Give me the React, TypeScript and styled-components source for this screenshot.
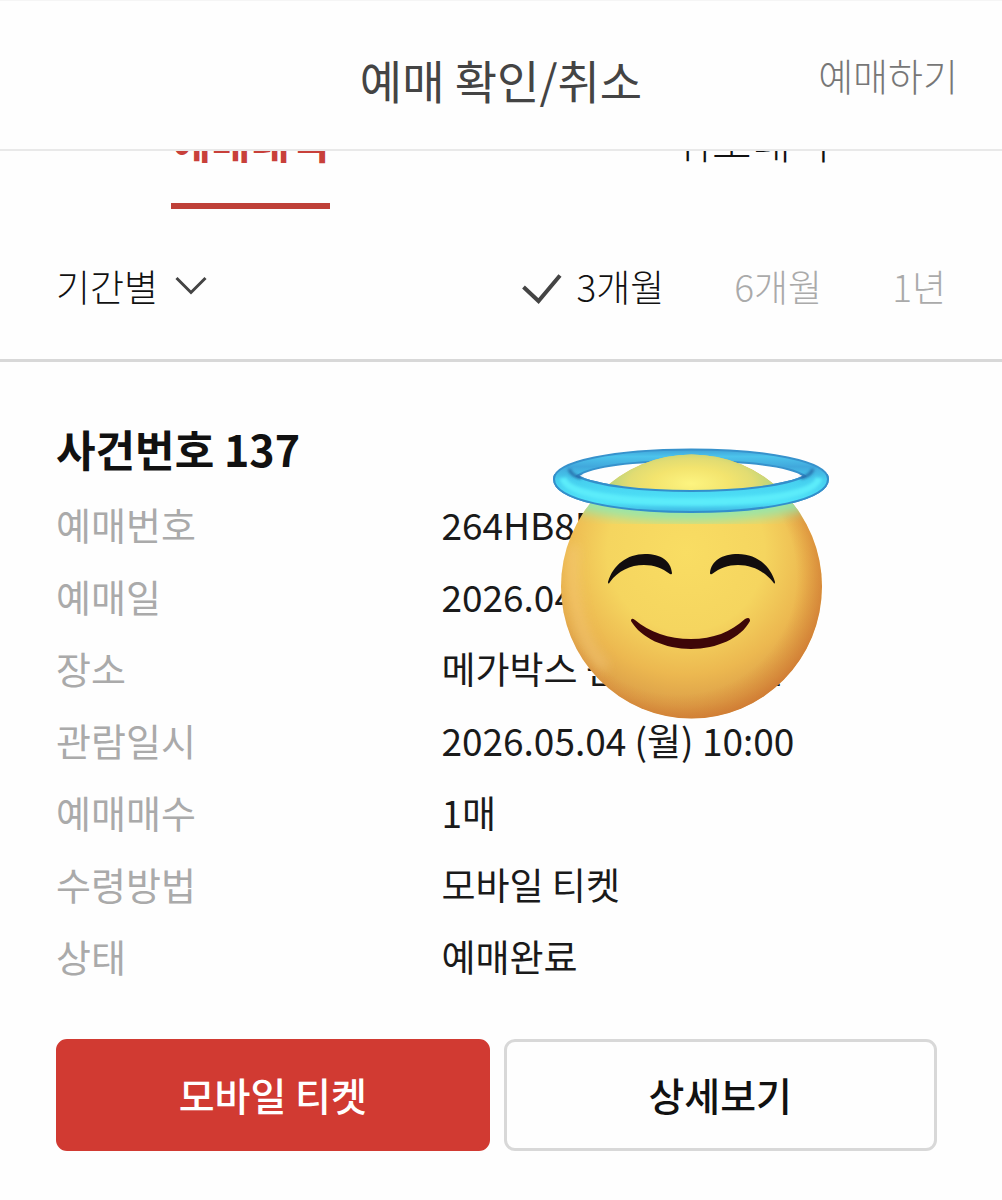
import React, { useState } from "react";
import styled, { createGlobalStyle } from "styled-components";

const GlobalStyle = createGlobalStyle`
  * { box-sizing: border-box; }
  body {
    margin: 0;
    background: #fefefe;
    color: #1a1a1a;
    font-family: "Noto Sans CJK KR", "Noto Sans", sans-serif;
  }
  button, select, input { font: inherit; color: inherit; }
`;

const Page = styled.div`
  min-height: 100vh;
`;

const Header = styled.header`
  position: sticky;
  top: 0;
  z-index: 2;
  display: grid;
  grid-template-columns: 1fr auto 1fr;
  align-items: center;
  height: 151px;
  padding: 8px 44px 0;
  background: #fefefe;
  border-top: 1px solid #f5f5f5;
  border-bottom: 2px solid #e9e9e9;
`;

const Title = styled.h1`
  grid-column: 2;
  margin: 0;
  font-size: 46px;
  font-weight: 400;
  line-height: 64px;
  color: #444;
`;

const BookLink = styled.a`
  justify-self: end;
  padding-bottom: 8px;
  font-size: 38px;
  font-weight: 300;
  line-height: 56px;
  color: #777;
  text-decoration: none;
`;

const Tabs = styled.nav`
  display: grid;
  grid-template-columns: 1fr 1fr;
  justify-items: center;
  margin-top: -48px;
`;

const Tab = styled.button<{ $active?: boolean }>`
  height: 106px;
  padding: 0 0 26px;
  border: 0;
  border-bottom: 6px solid ${(p) => (p.$active ? "#bf4038" : "transparent")};
  background: none;
  font-size: 43px;
  font-weight: ${(p) => (p.$active ? 700 : 300)};
  line-height: 64px;
  color: ${(p) => (p.$active ? "#c8403a" : "#111")};
`;

const Filters = styled.section`
  display: flex;
  align-items: center;
  justify-content: space-between;
  height: 153px;
  padding: 4px 56px 0;
  border-bottom: 3px solid #d8d8d8;
  font-size: 37px;
  font-weight: 300;
  line-height: 56px;
`;

const FilterMenu = styled.button`
  display: flex;
  align-items: center;
  gap: 17px;
  padding: 0;
  border: 0;
  background: none;
  color: #111;
`;

const Periods = styled.div`
  display: flex;
  gap: 70px;
`;

const Period = styled.label<{ $active: boolean }>`
  display: flex;
  align-items: center;
  gap: 14px;
  color: ${(p) => (p.$active ? "#111" : "#aaa")};
`;

const CheckMark = styled.svg`
  margin-top: 6px;
`;

const HiddenRadio = styled.input`
  position: absolute;
  opacity: 0;
  pointer-events: none;
`;

const Ticket = styled.article`
  position: relative;
  padding: 54px 65px 48px 56px;
`;

const MovieTitle = styled.h2`
  margin: 0 0 16px;
  font-size: 43px;
  font-weight: 700;
  line-height: 64px;
  color: #111;
`;

const Details = styled.dl`
  display: grid;
  grid-template-columns: 7fr 9fr;
  row-gap: 16px;
  margin: 0;
  line-height: 56px;
`;

const Term = styled.dt`
  font-size: 38px;
  color: #aaa;
`;

const Value = styled.dd`
  margin: 0;
  font-size: 37px;
  white-space: nowrap;
`;

const Actions = styled.div`
  display: grid;
  grid-template-columns: 1fr 1fr;
  gap: 14px;
  margin-top: 55px;
`;

const ActionButton = styled.button<{ $primary?: boolean }>`
  height: 112px;
  padding: 0 0 2px;
  border: 3px solid ${(p) => (p.$primary ? "#d13a32" : "#d8d8d8")};
  border-radius: 11px;
  background: ${(p) => (p.$primary ? "#d13a32" : "#fefefe")};
  color: ${(p) => (p.$primary ? "#fff" : "#111")};
  font-size: 39px;
  font-weight: 500;
  line-height: 56px;
`;

const Sticker = styled.svg`
  position: absolute;
  top: 84px;
  left: 550px;
  width: 282px;
  height: 276px;
`;

const ChevronIcon = () => (
  <svg width="32" height="20" viewBox="0 0 32 20" fill="none" aria-hidden="true">
    <path d="M1.5 2 16 16.5 30.5 2" stroke="#444" strokeWidth="3" />
  </svg>
);

const CheckIcon = () => (
  <CheckMark width="40" height="30" viewBox="0 0 40 30" fill="none" aria-hidden="true">
    <path d="M1.5 13 16.5 27 38 1.5" stroke="#444" strokeWidth="4" />
  </CheckMark>
);

const ringShape =
  "M554 479C554 461 616 449.500 691 449.500S828 461 828 479C828 500 766 512 691 512S554 500 554 479Z" +
  "M577 476C597 486 643 491 691 491S785 486 805 476C788 465 744 461 691 461S594 465 577 476Z";

const HaloFace = () => (
  <Sticker viewBox="550 446 282 276" role="img" aria-label="천사 스티커">
    <defs>
      <radialGradient id="face" cx="686" cy="552" r="175" gradientUnits="userSpaceOnUse">
        <stop offset="0" stopColor="#f9dd63" />
        <stop offset="0.45" stopColor="#f5d55f" />
        <stop offset="0.7" stopColor="#ecb850" />
        <stop offset="0.88" stopColor="#dc9f48" />
        <stop offset="1" stopColor="#cc8038" />
      </radialGradient>
      <radialGradient id="rim" cx="678" cy="576" r="148" gradientUnits="userSpaceOnUse">
        <stop offset="0.8" stopColor="#d98534" stopOpacity="0" />
        <stop offset="1" stopColor="#cf7630" stopOpacity="0.75" />
      </radialGradient>
      <radialGradient id="crown" cx="691" cy="484" r="78" gradientTransform="matrix(1 0 0 0.4 0 290)" gradientUnits="userSpaceOnUse">
        <stop offset="0" stopColor="#fdf480" />
        <stop offset="0.5" stopColor="#f3e46e" />
        <stop offset="0.8" stopColor="#e2dc72" />
        <stop offset="1" stopColor="#c3d67a" />
      </radialGradient>
      <linearGradient id="ring" x1="0" y1="449" x2="0" y2="512" gradientUnits="userSpaceOnUse">
        <stop offset="0" stopColor="#3d9ed6" />
        <stop offset="0.12" stopColor="#4cc4ec" />
        <stop offset="0.28" stopColor="#41a8dc" />
        <stop offset="0.5" stopColor="#46cfef" />
        <stop offset="0.85" stopColor="#4fe3f8" />
        <stop offset="1" stopColor="#3fb5e2" />
      </linearGradient>
      <filter id="soft" x="-30%" y="-100%" width="160%" height="300%">
        <feGaussianBlur stdDeviation="6" />
      </filter>
      <filter id="fine" x="-10%" y="-50%" width="120%" height="200%">
        <feGaussianBlur stdDeviation="1.5" />
      </filter>
      <clipPath id="faceClip">
        <ellipse cx="691.5" cy="586.5" rx="130.5" ry="132" />
      </clipPath>
      <clipPath id="frontClip">
        <path d="M550 474H590V480H792V474H832V520H550Z" />
      </clipPath>
    </defs>

    <path d={ringShape} fill="url(#ring)" fillRule="evenodd" stroke="#3792cc" strokeWidth="2" />

    <ellipse cx="691.5" cy="586.5" rx="130.5" ry="132" fill="url(#face)" />
    <g clipPath="url(#faceClip)">
      <ellipse cx="691.5" cy="586.5" rx="130.5" ry="132" fill="url(#rim)" />
      <rect x="590" y="450" width="204" height="52" fill="url(#crown)" />
      <path d="M574 545C568 600 582 645 606 668" fill="none" stroke="#f7cf85" strokeWidth="9" opacity="0.55" filter="url(#soft)" />
      <path d="M576 500Q691 524 806 500" fill="none" stroke="#96e6aa" strokeWidth="20" filter="url(#soft)" />
    </g>

    <g clipPath="url(#frontClip)">
      <path d={ringShape} fill="url(#ring)" fillRule="evenodd" stroke="#338fcb" strokeWidth="2" />
    </g>
    <g fill="none">
      <path d="M563 478C566 495 624 502 691 502S816 495 819 478" stroke="#5cecfa" strokeWidth="7" filter="url(#fine)" />
      <path d="M569 469C571 474 574 476 581 478M813 469C811 474 808 476 801 478" stroke="#2468a6" strokeWidth="3" filter="url(#fine)" />
    </g>

    <path fill="#120d0e" d="M608 582C613 565 627 554 645 554C661 554 671 561 672 573Q672 575 670 574C662 568 654 565 644 565C630 565 618 571 610 582Q608 585 608 582Z" />
    <path fill="#120d0e" d="M775 582C770 565 756 554 738 554C722 554 711 561 710 573Q710 575 712 574C720 568 728 565 738 565C752 565 764 571 773 582Q775 585 775 582Z" />
    <path fill="#3d0608" d="M631 621Q631 617 635 620C649 632 669 639 691 639C713 639 731 632 745 619Q750 616 750 621C741 638 717 649 691 649C665 649 641 638 631 621Z" />
  </Sticker>
);

const periods = ["3개월", "6개월", "1년"];

const details: [string, string][] = [
  ["예매번호", "264HB8E"],
  ["예매일", "2026.04"],
  ["장소", "메가박스 원그로브 1관"],
  ["관람일시", "2026.05.04 (월) 10:00"],
  ["예매매수", "1매"],
  ["수령방법", "모바일 티켓"],
  ["상태", "예매완료"],
];

export default function App() {
  const [period, setPeriod] = useState(periods[0]);
  return (
    <Page>
      <GlobalStyle />
      <Header>
        <Title>예매 확인/취소</Title>
        <BookLink href="#booking">예매하기</BookLink>
      </Header>
      <main>
        <Tabs>
          <Tab type="button" $active>예매내역</Tab>
          <Tab type="button">취소내역</Tab>
        </Tabs>
        <Filters>
          <FilterMenu type="button">
            기간별
            <ChevronIcon />
          </FilterMenu>
          <Periods>
            {periods.map((name) => (
              <Period key={name} $active={name === period}>
                <HiddenRadio
                  type="radio"
                  name="period"
                  checked={name === period}
                  onChange={() => setPeriod(name)}
                />
                {name === period && <CheckIcon />}
                {name}
              </Period>
            ))}
          </Periods>
        </Filters>
        <Ticket>
          <MovieTitle>사건번호 137</MovieTitle>
          <Details>
            {details.map(([term, value]) => (
              <React.Fragment key={term}>
                <Term>{term}</Term>
                <Value>{value}</Value>
              </React.Fragment>
            ))}
          </Details>
          <Actions>
            <ActionButton type="button" $primary>모바일 티켓</ActionButton>
            <ActionButton type="button">상세보기</ActionButton>
          </Actions>
          <HaloFace />
        </Ticket>
      </main>
    </Page>
  );
}
